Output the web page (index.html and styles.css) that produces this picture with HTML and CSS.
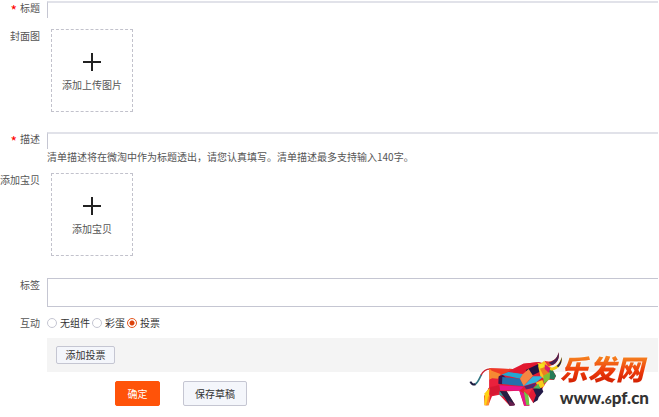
FILE: index.html
```
<!DOCTYPE html>
<html lang="zh-CN">
<head>
  <meta charset="UTF-8" />
  <meta name="viewport" content="width=device-width, initial-scale=1.0" />
  <title>发布清单</title>
  <link rel="stylesheet" href="styles.css">
</head>
<body>
  <form class="form">
    <div class="row row-title">
      <label class="name" for="title"><span class="star">*</span>标题</label>
      <input class="line-input" type="text" id="title" />
    </div>

    <div class="row row-cover">
      <label class="name" for="cover">封面图</label>
      <button class="upload" type="button" id="cover">
        <svg class="plus" viewBox="0 0 20 20" aria-hidden="true"><path d="M10 1v18M1 10h18" /></svg>
        添加上传图片
      </button>
    </div>

    <div class="row row-desc">
      <label class="name" for="desc"><span class="star">*</span>描述</label>
      <div class="field">
        <input class="line-input" type="text" id="desc" />
        <p class="hint">清单描述将在微淘中作为标题透出，请您认真填写。清单描述最多支持输入140字。</p>
      </div>
    </div>

    <div class="row row-goods">
      <label class="name" for="goods">添加宝贝</label>
      <button class="upload" type="button" id="goods">
        <svg class="plus" viewBox="0 0 20 20" aria-hidden="true"><path d="M10 1v18M1 10h18" /></svg>
        添加宝贝
      </button>
    </div>

    <div class="row row-tags">
      <label class="name" for="tags">标签</label>
      <input class="box-input" type="text" id="tags" />
    </div>

    <div class="row row-widget">
      <span class="name" id="widget-name">互动</span>
      <div class="radios" role="radiogroup" aria-labelledby="widget-name">
        <label><input type="radio" name="widget" value="none" />无组件</label>
        <label><input type="radio" name="widget" value="egg" />彩蛋</label>
        <label><input type="radio" name="widget" value="vote" checked />投票</label>
      </div>
    </div>

    <div class="panel">
      <button class="btn btn-small" type="button">添加投票</button>
    </div>

    <div class="actions">
      <button class="btn btn-primary" type="submit">确定</button>
      <button class="btn" type="button">保存草稿</button>
    </div>
  </form>

  <div class="brand">
    <svg class="bull" viewBox="15 12 285 174" aria-hidden="true">
      <!-- tail -->
      <path d="M19 110q6 12 16 7c12-7 16-30 26-39q8-7 20-6" fill="none" stroke="#fff" stroke-width="10" />
      <path d="M19 110q6 12 16 7" fill="none" stroke="#1d1b40" stroke-width="6" />
      <path d="M34 117c9-5 12-18 19-29" fill="none" stroke="#2f7582" stroke-width="5" />
      <path d="M51 91q9-19 27-19" fill="none" stroke="#c82936" stroke-width="4" />
      <!-- body -->
      <path d="M76 70L146 72 178 56 225 51 248 58 262 70 276 92 270 105 253 104 239 123 228 148 208 175 191 148 196 182 180 182 166 137 128 139 153 179 137 182 106 149 84 154 73 181 62 181 60 154 76 126z" fill="#e21b35" />
      <path d="M76 70L146 72 118 88 99 93z" fill="#ef3b24" />
      <path d="M76 70L99 93 76 104z" fill="#ff8b2c" />
      <path d="M76 104L99 93 112 88 106 120 76 126z" fill="#e9213c" />
      <path d="M83 77L110 87 102 101 78 99z" fill="#f58a33" />
      <path d="M104 94L117 89 131 104 115 118 103 116z" fill="#371750" />
      <path d="M112 89L133 81 178 87 168 101z" fill="#24a8d2" />
      <path d="M115 96L168 101 181 124 114 117z" fill="#2470ad" />
      <path d="M146 82L178 56 225 51 184 87z" fill="#e2182f" />
      <path d="M185 75L225 56 239 75 199 94z" fill="#241342" />
      <path d="M176 88L194 72 207 92 179 123 168 101z" fill="#f58642" />
      <path d="M179 123L207 94 239 94 217 112z" fill="#31b4dc" />
      <path d="M106 121L179 125 166 137 108 136z" fill="#e7168b" />
      <path d="M73 130L105 121 109 139 91 149 79 149z" fill="#d61832" />
      <path d="M181 124L218 113 207 130 188 136z" fill="#4f286f" />
      <path d="M179 135L206 129 193 151z" fill="#f5333d" />
      <path d="M166 137L190 151 196 182 181 182z" fill="#e5158b" />
      <path d="M179 138L193 151 196 181 187 181z" fill="#72c743" />
      <path d="M62 145L77 129 74 162 68 181 61 181z" fill="#ffd414" />
      <path d="M72 157L78 148 75 181 66 181z" fill="#ff9225" />
      <path d="M107 138L128 139 153 179 137 182 121 157z" fill="#252043" />
      <path d="M107 138L119 156 106 149z" fill="#22a6a3" />
      <path d="M133 165L153 178 151 182 137 182z" fill="#661e4e" />
      <!-- bent foreleg -->
      <path d="M207 131L232 125 238 140 224 157 221 166 207 174 216 151z" fill="#231b47" />
      <path d="M215 113L235 105 242 122 230 130z" fill="#f7cd19" />
      <path d="M207 130L223 116 229 131z" fill="#50b957" />
      <!-- head and horns -->
      <path d="M222 62L240 48 261 67 267 87 248 107 229 93z" fill="#f7c51c" />
      <path d="M220 53L241 59 234 80z" fill="#f4e51e" />
      <path d="M228 71L245 65 255 83 239 94z" fill="#ee7c22" />
      <path d="M243 58L259 69 256 85 242 72z" fill="#d91e69" />
      <path d="M256 76L266 76 276 93 270 104 255 101z" fill="#267b58" />
      <path d="M238 92L258 82 257 103 239 117z" fill="#7fbf35" />
      <path d="M241 47C262 54 279 45 284 22 288 44 276 62 252 64z" fill="#eb3a2c" />
      <path d="M254 53C271 48 280 39 284 22 287 40 281 53 264 61z" fill="#452151" />
      <path d="M258 68C275 68 288 55 293 36 296 57 284 73 263 77z" fill="#f5cd13" />
      <path d="M278 63Q289 55 293 36 295 54 283 67z" fill="#292043" />
    </svg>
    <div class="brand-text">
      <span class="brand-name">乐发网</span>
      <span class="brand-url">www.<small>6</small>pf.cn</span>
    </div>
  </div>
</body>
</html>
```

FILE: styles.css
```
* { box-sizing: border-box; }
body {
  margin: 0;
  background: #fff;
  color: #555;
  font: 10px/14px "Noto Sans CJK SC", sans-serif;
}
input, button { font: inherit; color: inherit; margin: 0; }
button { cursor: pointer; padding: 0; }

.form { padding: 1px 1px 10px 0; }
.row { display: grid; grid-template-columns: 40px 1fr; column-gap: 7px; align-items: start; }
.name { display: flex; align-items: center; justify-content: flex-end; white-space: nowrap; }
.star { color: #f00; font-size: 14px; line-height: 10px; padding-top: 6px; margin: -2px 3px 0 0; }

.row-title { height: 28px; }
.row-cover { height: 103px; }
.row-desc { height: 41px; }
.row-goods { height: 105px; }
.row-tags { height: 38px; }
.row-widget { height: 22px; }

.line-input {
  display: block; width: 100%; height: 17px; padding: 0 6px;
  background: #fff; border: 0; border-radius: 0; outline: 0;
  border-top: 2px solid #e1e2e9; border-left: 1px solid #c5c6d2;
}
.box-input {
  width: 100%; height: 29px; padding: 0 6px;
  background: #fff; border: 1px solid #c5c6d2; border-right: 0; border-radius: 0; outline: 0;
}
.hint { margin: 1px 0 0; }

.upload {
  display: flex; flex-direction: column; align-items: center; justify-content: center;
  gap: 6px; width: 82px; height: 83px; padding-top: 2px; margin-left: 4px;
  background: #fff; border: 1px dashed #c2c2cc;
}
.plus { width: 20px; height: 20px; stroke: #222; stroke-width: 2; }

.radios { display: flex; gap: 2px; color: #333; }
.radios label { display: flex; align-items: center; gap: 3px; }
.radios input {
  appearance: none; width: 10px; height: 10px;
  background: #fff; border: 1px solid #c5c6d2; border-radius: 50%;
}
.radios input:checked {
  border-color: #e4571e;
  background: radial-gradient(circle, #dc420b 2px, #fff 3px);
}

.panel { margin-left: 47px; padding: 8px 9px; background: #f4f4f4; }
.btn {
  display: block; width: 64px; height: 25px;
  background: #f4f6fb; color: #333; border: 1px solid #c5c6d2; border-radius: 2px;
}
.btn-small { width: 59px; height: 18px; }
.btn-primary { width: 45px; background: #ff5309; border-color: #ff5309; color: #fff; }
.actions { display: flex; gap: 23px; padding: 9px 0 0 115px; }

/* site mark over the bottom right corner */
.brand { position: absolute; right: 10px; top: 349px; display: flex; align-items: flex-start; }
.bull { width: 95px; height: 58px; }
.brand-text { display: flex; flex-direction: column; margin-left: -4px; }
.brand-name {
  font-size: 28px; line-height: 39px; font-weight: 900; font-style: italic;
  background: linear-gradient(#f58220 20%, #ee3d0b 55%, #cf1c00 90%);
  -webkit-background-clip: text; background-clip: text; color: transparent;
  filter: drop-shadow(0 0 1px #fff);
}
.brand-url { font: 900 17px/20px Lato, sans-serif; color: #333; }
.brand-url small { font-size: 12px; }
```
